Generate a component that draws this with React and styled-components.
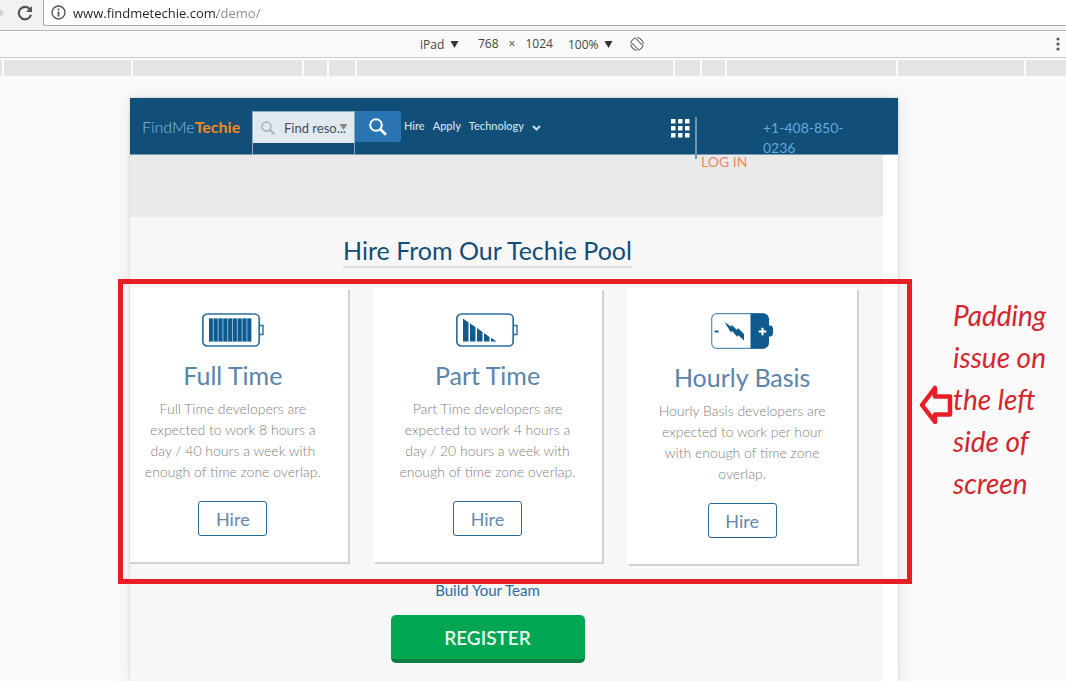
import React from "react";
import styled, { createGlobalStyle } from "styled-components";

const GlobalStyle = createGlobalStyle`
  *, *::before, *::after { box-sizing: border-box; }
  body {
    margin: 0;
    background: #fafafa;
    font-family: Lato, "Liberation Sans", sans-serif;
  }
  a { text-decoration: none; }
  button, input, select { font-family: inherit; }
`;

const Page = styled.div`
  display: flex;
  flex-direction: column;
  height: 100vh;
  overflow: hidden;
`;

/* ---------- browser chrome ---------- */

const AddressBar = styled.header`
  display: flex;
  flex: none;
  align-items: flex-start;
  height: 31px;
  background: #f2f2f2;
  border-bottom: 1px solid #b4b4b4;
`;

const ChromeButton = styled.button`
  display: flex;
  align-items: center;
  justify-content: center;
  flex: none;
  width: ${(p) => p.$width}px;
  height: 25px;
  padding: 0;
  border: 0;
  background: none;
  color: #555;
`;

const UrlField = styled.label`
  display: flex;
  align-items: center;
  flex: 1;
  gap: 7px;
  height: 26px;
  padding-left: 7px;
  background: #fff;
  border: solid #a9a9a9;
  border-width: 0 0 1px 1px;
  border-bottom-left-radius: 3px;
`;

const UrlInput = styled.input`
  flex: 1;
  height: 24px;
  padding: 0;
  border: 0;
  outline: 0;
  color: #333;
  font-family: "Open Sans", sans-serif;
  font-size: 13px;
  background: linear-gradient(90deg, #222 144px, #8a8a8a 144px);
  background-clip: text;
  -webkit-background-clip: text;
  -webkit-text-fill-color: transparent;
`;

const DeviceBar = styled.div`
  display: flex;
  align-items: center;
  flex: none;
  height: 27px;
  padding: 0 3px 0 420px;
  border-bottom: 1px solid #ccc;
  color: #444;
  font-family: "Open Sans", sans-serif;
  font-size: 12px;
  line-height: 16px;
`;

const Picker = styled.label`
  display: flex;
  align-items: center;
  gap: 5px;
  margin-right: ${(p) => p.$space}px;
`;

const PlainSelect = styled.select`
  appearance: none;
  padding: 0;
  border: 0;
  outline: 0;
  background: none;
  color: inherit;
  font-size: inherit;
`;

const Dimensions = styled.div`
  display: flex;
  gap: 10px;
  margin-right: 15px;
`;

const MenuButton = styled(ChromeButton)`
  margin-left: auto;
`;

const Ruler = styled.div`
  display: grid;
  flex: none;
  grid-template-columns: 2fr 127fr 170fr 23fr 26fr 316fr 25fr 23fr 170fr 126fr 40fr;
  gap: 2px;
  height: 18px;
  padding-top: 2px;
`;

const Tick = styled.span`
  background: #e5e5e5;
`;

/* ---------- emulated device ---------- */

const Stage = styled.main`
  position: relative;
  display: flex;
  flex: 1;
  min-height: 0;
  padding: 22px 0 0 130px;
  overflow: hidden;
`;

const Device = styled.div`
  flex: 1;
  min-width: 0;
  background: #fff;
  box-shadow: 0 0 16px rgba(0, 0, 0, 0.1), 0 0 1px 1px rgba(0, 0, 0, 0.06);
`;

const SiteHeader = styled.header`
  position: relative;
  z-index: 1;
  display: flex;
  align-items: flex-start;
  height: 57px;
  padding: 13px 0 0 12px;
  background: #114e78;
  border-bottom: 1px solid #7b9bb3;
`;

const Logo = styled.a`
  flex: none;
  width: 110px;
  color: #86bde0;
  font-size: 16px;
  font-weight: 300;
  line-height: 32px;
  b { color: #f08a1d; font-weight: 700; }
`;

const SearchForm = styled.form`
  display: flex;
  align-items: flex-start;
  flex: none;
`;

const SearchFrame = styled.div`
  width: 103px;
  height: 44px;
  border: 1px solid #8fa9bc;
`;

const SearchField = styled.label`
  display: flex;
  align-items: center;
  gap: 9px;
  height: 31px;
  padding: 0 5px 0 8px;
  background: #e1e8ee;
  color: #a5acb2;
`;

const SkillSelect = styled(PlainSelect)`
  flex: none;
  width: 64px;
  color: #3f5161;
  font-size: 13px;
`;

const SelectArrow = styled.svg`
  flex: none;
  margin-left: -18px;
`;

const SearchButton = styled.button`
  display: flex;
  align-items: center;
  justify-content: center;
  width: 46px;
  height: 31px;
  padding: 0;
  border: 0;
  border-radius: 0 2px 2px 0;
  background: #2a74b3;
  color: #fff;
`;

const Nav = styled.nav`
  display: flex;
  align-items: center;
  gap: 8px;
  margin-left: 3px;
  height: 30px;
`;

const NavLink = styled.a`
  display: flex;
  align-items: center;
  gap: 8px;
  color: #d3e2ec;
  font-size: 11px;
  font-weight: 500;
  line-height: 16px;
`;

const AppsButton = styled.button`
  margin: 8px 5px 0 auto;
  padding: 0;
  border: 0;
  height: 19px;
  background: none;
`;

const Account = styled.div`
  display: flex;
  align-items: flex-start;
  flex: none;
  width: 203px;
  height: 42px;
  margin-top: 6px;
  padding-left: 4px;
  border-left: 2px solid #6f93ad;
`;

const LoginLink = styled.a`
  width: 62px;
  margin-top: 35px;
  color: #e58d63;
  font-size: 14px;
  line-height: 20px;
`;

const Phone = styled.a`
  width: 88px;
  margin-top: 1px;
  color: #62a9de;
  font-size: 14px;
  line-height: 20px;
`;

const Content = styled.div`
  margin-right: 15px;
  overflow: hidden;
  background: #f7f7f7;
`;

const Banner = styled.div`
  height: 62px;
  background: #eaeaea;
`;

const Pool = styled.section`
  display: flex;
  flex-direction: column;
  align-items: center;
  margin: 0 26px 0 -12px;
  padding: 17px 0 32px;
`;

const PoolTitle = styled.h1`
  margin: 0 0 20px;
  border-bottom: 2px solid #dcdcdc;
  color: #124d77;
  font-size: 25px;
  font-weight: 400;
  line-height: 32px;
`;

const Cards = styled.div`
  display: grid;
  grid-template-columns: repeat(3, 1fr);
  align-items: start;
  gap: 25px;
  width: 100%;
`;

const Card = styled.article`
  display: flex;
  flex-direction: column;
  align-items: center;
  padding: 25px 24px 26px;
  background: #fff;
  box-shadow: 2px 2px 0 #d2d2d2;
  text-align: center;
`;

const CardTitle = styled.h2`
  margin: 12px 0 7px;
  color: #5a84aa;
  font-size: 25px;
  font-weight: 400;
  line-height: 32px;
`;

const CardText = styled.p`
  margin: 0 0 19px;
  color: #808080;
  font-size: 14px;
  font-weight: 300;
  line-height: 21px;
`;

const HireButton = styled.button`
  width: 69px;
  height: 35px;
  padding: 0;
  border: 1px solid #2f6a94;
  border-radius: 3px;
  background: #fff;
  color: #6488aa;
  font-size: 18px;
`;

const TeamLink = styled.a`
  margin: 16px 0 15px;
  color: #2c6da4;
  font-size: 15px;
  line-height: 20px;
`;

const RegisterButton = styled.button`
  width: 194px;
  height: 48px;
  padding: 0;
  border: 0;
  border-bottom: 4px solid #0b8043;
  border-radius: 5px;
  background: #00a651;
  color: #e9fbf0;
  font-size: 19px;
  font-weight: 600;
`;

/* ---------- reviewer's notes ---------- */

const Highlight = styled.div`
  position: absolute;
  z-index: 2;
  top: 203px;
  left: 118px;
  right: 154px;
  height: 305px;
  border: 5px solid #e81e25;
  pointer-events: none;
`;

const Notes = styled.aside`
  display: flex;
  align-items: flex-start;
  flex: none;
  width: 168px;
  padding: 196px 8px 0 21px;
`;

const NoteArrow = styled.svg`
  flex: none;
  margin-top: 90px;
`;

const NoteText = styled.p`
  margin: 0;
  color: #d4252c;
  font-family: "Segoe Print", "Bradley Hand", Lato, sans-serif;
  font-size: 28px;
  font-style: italic;
  line-height: 42px;
`;

const blue = "#0f5b8f";

const Triangle = () => (
  <svg width="9" height="9" viewBox="0 0 9 9" aria-hidden="true">
    <path d="M0.500 1h8L4.500 8z" fill="#333" />
  </svg>
);

const Magnifier = ({ size, weight }) => (
  <svg width={size} height={size} viewBox="0 0 18 18" fill="none" stroke="currentColor" strokeWidth={weight} aria-hidden="true">
    <circle cx="7" cy="7" r="5.800" />
    <path d="M11.300 11.300 17 16.800" strokeWidth={weight + 0.6} />
  </svg>
);

const BatteryShell = ({ children }) => (
  <svg width="62" height="34" viewBox="0 0 62 34" aria-hidden="true">
    <rect x="0.800" y="1" width="56.400" height="32" rx="4.500" fill="#fff" stroke="#2e6d9c" strokeWidth="1.700" />
    <path d="M57.500 12.500h3.500v9h-3.500" fill="none" stroke="#2e6d9c" strokeWidth="1.400" />
    {children}
  </svg>
);

const FullBattery = () => (
  <BatteryShell>
    <rect x="7" y="5.500" width="42.500" height="23" fill="#8db4d0" />
    {Array.from({ length: 9 }, (_, i) => (
      <rect key={i} x={7 + i * 4.8} y="5.500" width="3.800" height="23" fill={blue} />
    ))}
  </BatteryShell>
);

const PartBattery = () => (
  <BatteryShell>
    <path
      fill={blue}
      d="M7 5.500l5.500 4v19H7zM14 10.300l5.500 4v14.200H14zM21 15.100l5.500 4v9.400H21zM28 20l5.500 4v4.500H28zM35 24.800l5.500 3.700H35z"
    />
  </BatteryShell>
);

const HourlyBattery = () => (
  <svg width="62" height="36" viewBox="0 0 62 36" aria-hidden="true">
    <rect x="0.700" y="0.700" width="56" height="34.600" rx="5" fill="#fff" stroke="#5a8db3" strokeWidth="1.200" />
    <path d="M39.500 0.500H53q5 1 5 6v6h2q2 1 2 3v5q0 2-2 3h-2v6q0 5-5 6H39.500z" fill={blue} />
    <path d="M3.500 18.500h4.200" stroke={blue} strokeWidth="1.800" />
    <path d="M47.700 18.500h7.600M51.500 14.700v7.600" stroke="#fff" strokeWidth="2.200" />
    <path d="M13.500 9l6.500 4.500 1-1.500 5 5 1-2 6 6v6.500l-6-5.500-.8 2-5-6-1.200 1.500z" fill={blue} />
  </svg>
);

const plans = [
  { title: "Full Time", Icon: FullBattery, text: "Full Time developers are expected to work 8 hours a day / 40 hours a week with enough of time zone overlap." },
  { title: "Part Time", Icon: PartBattery, text: "Part Time developers are expected to work 4 hours a day / 20 hours a week with enough of time zone overlap." },
  { title: "Hourly Basis", Icon: HourlyBattery, text: "Hourly Basis developers are expected to work per hour with enough of time zone overlap." },
];

export default function App() {
  return (
    <Page>
      <GlobalStyle />
      <AddressBar>
        <ChromeButton $width={6} aria-label="Forward">
          <svg width="6" height="12" viewBox="0 0 6 12" aria-hidden="true">
            <path d="M-2 0 4 6-2 12z" fill="#d0d0d0" />
          </svg>
        </ChromeButton>
        <ChromeButton $width={37} aria-label="Reload">
          <svg width="16" height="16" viewBox="0 0 16 16" aria-hidden="true">
            <path d="M13.300 4.800A6.200 6.200 0 1 0 14 9.700" fill="none" stroke="currentColor" strokeWidth="2.200" />
            <path d="M15 1v6H9z" fill="currentColor" />
          </svg>
        </ChromeButton>
        <UrlField>
          <svg width="15" height="15" viewBox="0 0 15 15" aria-hidden="true">
            <circle cx="7.500" cy="7.500" r="6.500" fill="none" stroke="#555" strokeWidth="1.400" />
            <path d="M7.500 6.500v5M7.500 3.500v1.800" stroke="#555" strokeWidth="1.800" />
          </svg>
          <UrlInput aria-label="Address" defaultValue="www.findmetechie.com/demo/" />
        </UrlField>
      </AddressBar>

      <DeviceBar>
        <Picker $space={19}>
          <PlainSelect aria-label="Device"><option>iPad</option></PlainSelect>
          <Triangle />
        </Picker>
        <Dimensions>
          <span>768</span>
          <span>×</span>
          <span>1024</span>
        </Dimensions>
        <Picker $space={17}>
          <PlainSelect aria-label="Zoom"><option>100%</option></PlainSelect>
          <Triangle />
        </Picker>
        <ChromeButton $width={14} aria-label="Rotate">
          <svg width="14" height="14" viewBox="0 0 14 14" fill="none" stroke="#666" strokeWidth="1" aria-hidden="true">
            <rect x="4" y="1" width="6" height="12" rx="1" transform="rotate(-45 7 7)" />
            <path d="M7 .7A6.300 6.300 0 0 1 13.300 7M7 13.300A6.300 6.300 0 0 1 .7 7M9 .8l4 4M1 9l4 4" />
          </svg>
        </ChromeButton>
        <MenuButton $width={10} aria-label="More options">
          <svg width="4" height="14" viewBox="0 0 4 14" fill="#555" aria-hidden="true">
            <circle cx="2" cy="2" r="1.600" />
            <circle cx="2" cy="7" r="1.600" />
            <circle cx="2" cy="12" r="1.600" />
          </svg>
        </MenuButton>
      </DeviceBar>

      <Ruler>
        {Array.from({ length: 11 }, (_, i) => <Tick key={i} />)}
      </Ruler>

      <Stage>
        <Device>
          <SiteHeader>
            <Logo href="#home">FindMe<b>Techie</b></Logo>
            <SearchForm>
              <SearchFrame>
                <SearchField>
                  <Magnifier size={14} weight={1.8} />
                  <SkillSelect aria-label="Find resources"><option>Find reso...</option></SkillSelect>
                  <SelectArrow width="9" height="9" viewBox="0 0 9 9" aria-hidden="true">
                    <path d="M0.500 1h8L4.500 7z" fill="#888" />
                  </SelectArrow>
                </SearchField>
              </SearchFrame>
              <SearchButton type="button" aria-label="Search">
                <Magnifier size={18} weight={2} />
              </SearchButton>
            </SearchForm>
            <Nav>
              <NavLink href="#hire">Hire</NavLink>
              <NavLink href="#apply">Apply</NavLink>
              <NavLink href="#technology">
                Technology
                <svg width="9" height="12" viewBox="0 0 9 12" fill="none" stroke="#c9dae6" strokeWidth="2.200" aria-hidden="true">
                  <path d="M1 6l3.500 3.500L8 6" />
                </svg>
              </NavLink>
            </Nav>
            <AppsButton aria-label="All apps">
              <svg width="19" height="19" viewBox="0 0 19 19" fill="#fff" aria-hidden="true">
                {[0, 7, 14].map((y) => [0, 7, 14].map((x) => (
                  <rect key={`${x}-${y}`} x={x} y={y} width="4.500" height="4.500" />
                )))}
              </svg>
            </AppsButton>
            <Account>
              <LoginLink href="#login">LOG IN</LoginLink>
              <Phone href="tel:+14088500236">+1-408-850-0236</Phone>
            </Account>
          </SiteHeader>

          <Content>
            <Banner />
            <Pool>
              <PoolTitle>Hire From Our Techie Pool</PoolTitle>
              <Cards>
                {plans.map(({ title, Icon, text }) => (
                  <Card key={title}>
                    <Icon />
                    <CardTitle>{title}</CardTitle>
                    <CardText>{text}</CardText>
                    <HireButton>Hire</HireButton>
                  </Card>
                ))}
              </Cards>
              <TeamLink href="#team">Build Your Team</TeamLink>
              <RegisterButton>REGISTER</RegisterButton>
            </Pool>
          </Content>
        </Device>

        <Notes>
          <NoteArrow width="34" height="42" viewBox="0 0 34 42" aria-hidden="true">
            <path d="M3 21 16 4v8.500h15v18H16V38z" fill="none" stroke="#e81e25" strokeWidth="4.500" strokeLinejoin="round" />
          </NoteArrow>
          <NoteText>Padding issue on the left side of screen</NoteText>
        </Notes>
        <Highlight />
      </Stage>
    </Page>
  );
}
